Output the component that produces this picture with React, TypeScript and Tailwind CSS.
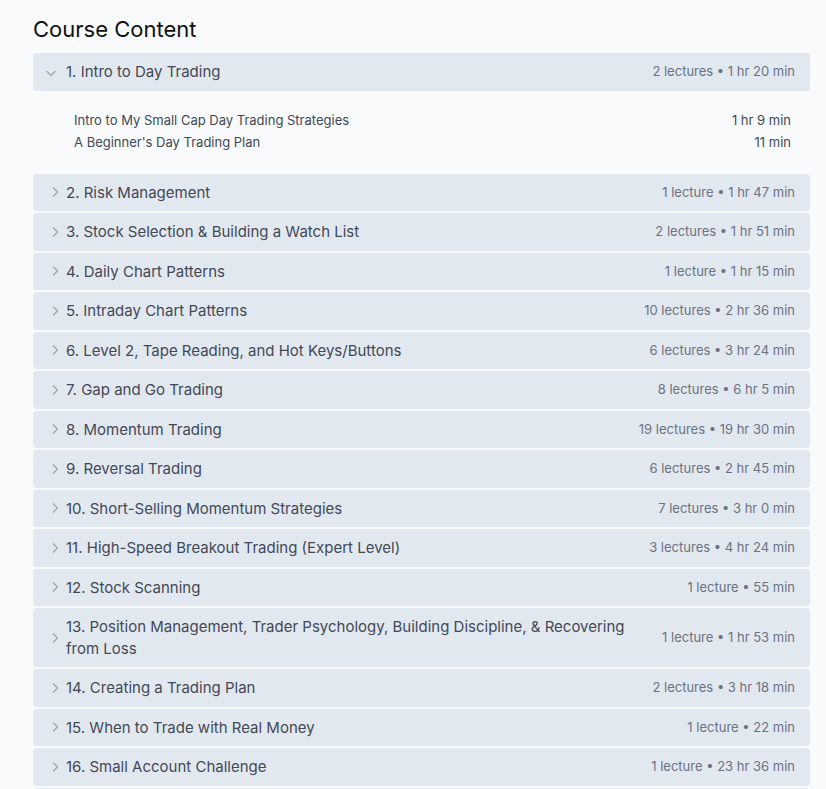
import React from "react";

const sections: [string, string][] = [
  ["1. Intro to Day Trading", "2 lectures • 1 hr 20 min"],
  ["2. Risk Management", "1 lecture • 1 hr 47 min"],
  ["3. Stock Selection & Building a Watch List", "2 lectures • 1 hr 51 min"],
  ["4. Daily Chart Patterns", "1 lecture • 1 hr 15 min"],
  ["5. Intraday Chart Patterns", "10 lectures • 2 hr 36 min"],
  ["6. Level 2, Tape Reading, and Hot Keys/Buttons", "6 lectures • 3 hr 24 min"],
  ["7. Gap and Go Trading", "8 lectures • 6 hr 5 min"],
  ["8. Momentum Trading", "19 lectures • 19 hr 30 min"],
  ["9. Reversal Trading", "6 lectures • 2 hr 45 min"],
  ["10. Short-Selling Momentum Strategies", "7 lectures • 3 hr 0 min"],
  ["11. High-Speed Breakout Trading (Expert Level)", "3 lectures • 4 hr 24 min"],
  ["12. Stock Scanning", "1 lecture • 55 min"],
  ["13. Position Management, Trader Psychology, Building Discipline, & Recovering from Loss", "1 lecture • 1 hr 53 min"],
  ["14. Creating a Trading Plan", "2 lectures • 3 hr 18 min"],
  ["15. When to Trade with Real Money", "1 lecture • 22 min"],
  ["16. Small Account Challenge", "1 lecture • 23 hr 36 min"],
];

const Chevron = ({ open }: { open: boolean }) => (
  <svg width="12" height="12" viewBox="0 0 12 12" fill="none" className="shrink-0 text-gray-400">
    {open ? (
      <path d="M1.5 4 L6 8.5 L10.5 4" stroke="currentColor" strokeWidth="1.1" />
    ) : (
      <path d="M4 1.5 L8.5 6 L4 10.5" stroke="currentColor" strokeWidth="1.1" />
    )}
  </svg>
);

export default function App() {
  return (
    <div
      className="min-h-screen bg-[#f8fafc] pl-[33px] pr-[16px] pt-[15px] overflow-hidden h-[789px]"
      style={{ fontFamily: "Inter, 'Noto Sans', sans-serif" }}
    >
      <h2 className="text-[22px] leading-[28px] text-[#111111] font-normal mb-[10px]">Course Content</h2>
      <div className="flex flex-col gap-[2px] w-[777px]">
        {sections.map(([title, meta], i) => (
          <React.Fragment key={i}>
            <div className="flex items-center bg-[#e2e8f0] rounded-[4px] pl-[12px] pr-[15px] py-[8px]">
              <div className={i === 0 ? "w-[21px] flex justify-start pt-[2px]" : "w-[21px] flex justify-start pl-[4px]"}>
                <Chevron open={i === 0} />
              </div>
              <div className="flex-1 text-[15px] leading-[21.5px] text-[#424955] pr-[24px]">{title}</div>
              <div className="text-[13px] leading-[21.5px] text-[#6b7280] whitespace-nowrap">{meta}</div>
            </div>
            {i === 0 && (
              <div className="pl-[41px] pr-[19px] pt-[16px] pb-[19px] text-[13px] leading-[22px] text-[#424955]">
                <div className="flex justify-between">
                  <span>Intro to My Small Cap Day Trading Strategies</span>
                  <span>1 hr 9 min</span>
                </div>
                <div className="flex justify-between">
                  <span>A Beginner's Day Trading Plan</span>
                  <span>11 min</span>
                </div>
              </div>
            )}
          </React.Fragment>
        ))}
        <div className="h-[20px] bg-[#e2e8f0] rounded-[4px]" />
      </div>
    </div>
  );
}
